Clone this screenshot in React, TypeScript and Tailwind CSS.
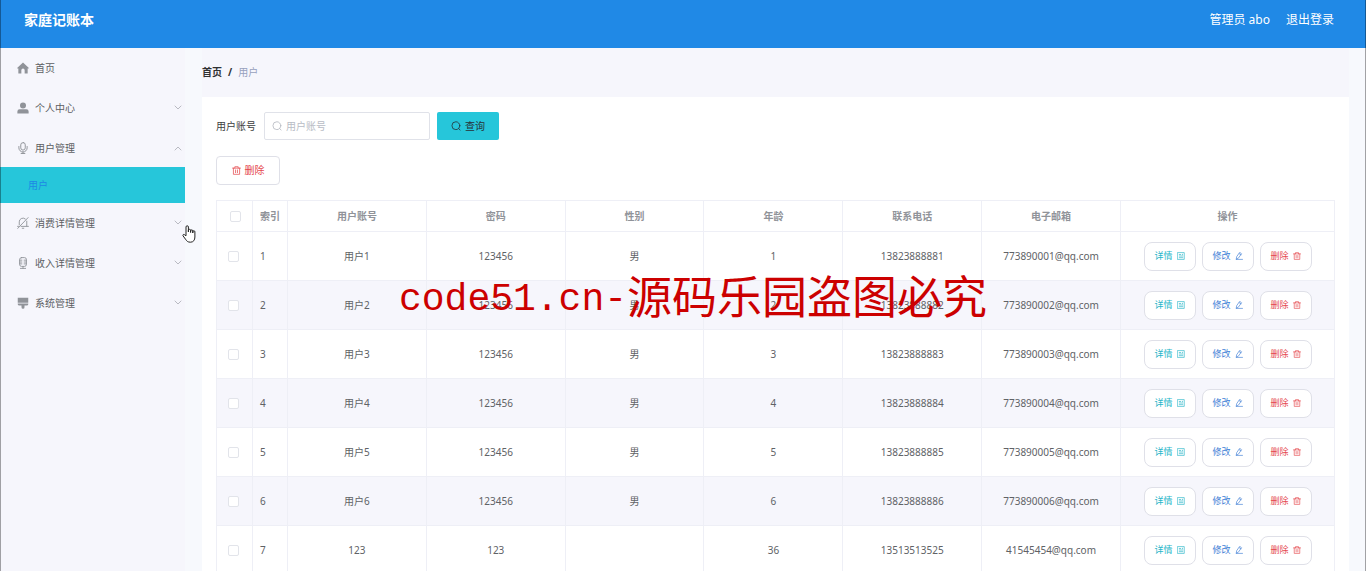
import type { ReactNode } from "react";

type IconProps = { className?: string };

const stroke = {
  viewBox: "0 0 16 16",
  fill: "none",
  stroke: "currentColor",
  strokeLinecap: "round",
  strokeLinejoin: "round",
  "aria-hidden": true,
} as const;

const HomeIcon = ({ className }: IconProps) => (
  <svg viewBox="0 0 16 16" fill="currentColor" className={className} aria-hidden>
    <path d="M8 .8.500 7.600c-.4.4-.2 1 .4 1h.9v6.600h4V11a2.200 2.200 0 0 1 4.400 0v4.200h4V8.600h.9c.6 0 .8-.6.4-1z" />
  </svg>
);

const UserIcon = ({ className }: IconProps) => (
  <svg viewBox="0 0 16 16" fill="currentColor" className={className} aria-hidden>
    <circle cx="8" cy="4.500" r="4" />
    <path d="M.5 15.200v-2.700a3 3 0 0 1 3-3h9a3 3 0 0 1 3 3v2.700z" />
  </svg>
);

const MicIcon = ({ className }: IconProps) => (
  <svg {...stroke} className={className} strokeWidth="1.300">
    <rect x="5" y=".8" width="6" height="10" rx="3" />
    <path d="M2.500 6v1.800a5.500 5.500 0 0 0 11 0V6M8 13.300v2M5.500 15.300h5" />
  </svg>
);

const BellOffIcon = ({ className }: IconProps) => (
  <svg {...stroke} className={className} strokeWidth="1.200">
    <path d="M3 10.500V6.500a5 5 0 0 1 8-4M13 5.500v7H5.500M.8 12.500H2M13 12.500h2.200M7 15h2M1 15.200 14.800.8" />
  </svg>
);

const MicroIcon = ({ className }: IconProps) => (
  <svg {...stroke} className={className} strokeWidth="1.200">
    <rect x="3.500" y=".8" width="9" height="11.700" rx="2.500" />
    <path d="M3.500 4.200h3M3.500 6.700h3M3.500 9.200h3M12.500 4.200h-3M12.500 6.700h-3M12.500 9.200h-3M8 12.500v2.700M4.500 15.200h7" />
  </svg>
);

const BrushIcon = ({ className }: IconProps) => (
  <svg viewBox="0 0 16 16" fill="currentColor" className={className} aria-hidden>
    <path d="M1 1h14v6.500H1zM1 8.500h14v1.200a1.500 1.500 0 0 1-1.500 1.500H10v2.500a2 2 0 0 1-4 0v-2.500H2.500A1.500 1.500 0 0 1 1 9.700z" />
  </svg>
);

const ChevronIcon = ({ className }: IconProps) => (
  <svg {...stroke} className={className} strokeWidth="1.600">
    <path d="m2 4 6 6 6-6" />
  </svg>
);

const SearchIcon = ({ className }: IconProps) => (
  <svg {...stroke} className={className} strokeWidth="1.300">
    <circle cx="7.800" cy="7.500" r="6.300" />
    <path d="m12.300 12 2.200 2.500" />
  </svg>
);

const TrashIcon = ({ className }: IconProps) => (
  <svg {...stroke} className={className} strokeWidth="1.300">
    <path d="M1 3.800h14M5 3.800V1.300h6v2.500M2.500 3.800v11h11v-11M6.300 7v4.800M9.700 7v4.800" />
  </svg>
);

const DocumentIcon = ({ className }: IconProps) => (
  <svg {...stroke} className={className} strokeWidth="1.300">
    <path d="M1.500 1.200h13v13.600h-13zM4.500 5h3M4.500 8h7M4.500 11.300h7M11 4.500v1" />
  </svg>
);

const EditIcon = ({ className }: IconProps) => (
  <svg {...stroke} className={className} strokeWidth="1.300">
    <path d="M10 1.200 13.200 3.500 6.500 12.500 2.500 14.500 3.200 10.200zM8.500 3.300l3.200 2.300M2.500 14.800H15" />
  </svg>
);

const menu = [
  { label: "首页", Icon: HomeIcon },
  { label: "个人中心", Icon: UserIcon, arrow: true },
  { label: "用户管理", Icon: MicIcon, arrow: true, open: true, child: "用户" },
  { label: "消费详情管理", Icon: BellOffIcon, arrow: true },
  { label: "收入详情管理", Icon: MicroIcon, arrow: true },
  { label: "系统管理", Icon: BrushIcon, arrow: true },
];

const columns = ["用户账号", "密码", "性别", "年龄", "联系电话", "电子邮箱"];

const users = [
  ["用户1", "123456", "男", "1", "13823888881", "773890001@qq.com"],
  ["用户2", "123456", "男", "2", "13823888882", "773890002@qq.com"],
  ["用户3", "123456", "男", "3", "13823888883", "773890003@qq.com"],
  ["用户4", "123456", "男", "4", "13823888884", "773890004@qq.com"],
  ["用户5", "123456", "男", "5", "13823888885", "773890005@qq.com"],
  ["用户6", "123456", "男", "6", "13823888886", "773890006@qq.com"],
  ["123", "123", "", "36", "13513513525", "41545454@qq.com"],
];

const Checkbox = ({ label }: { label: string }) => (
  <input
    type="checkbox"
    aria-label={label}
    className="block size-[11px] appearance-none rounded-xs border border-[#e2e4ea] bg-white checked:bg-[#26c6da]"
  />
);

const RowButton = ({ className, children }: { className: string; children: ReactNode }) => (
  <button
    type="button"
    className={`flex h-[29px] w-[52px] items-center justify-center gap-1 rounded-lg border border-[#dfe0e8] bg-white text-[9px] ${className}`}
  >
    {children}
  </button>
);

const Header = () => (
  <header className="flex h-12 shrink-0 items-center justify-between bg-[#2089e6] pr-8 pb-2 pl-6 text-white">
    <h1 className="text-sm font-bold">家庭记账本</h1>
    <div className="flex items-center gap-4 text-xs">
      <span>管理员 abo</span>
      <a href="#logout">退出登录</a>
    </div>
  </header>
);

const Sidebar = () => (
  <nav className="w-[185px] shrink-0 bg-[#f6f6fc] text-[#5c5e63]">
    <ul>
      {menu.map(({ label, Icon, arrow, open, child }) => (
        <li key={label}>
          <a href={`#${label}`} className="flex h-10 items-center pr-[3px] pl-[17px]">
            <Icon className="size-3 text-[#909399]" />
            <span className="ml-1.5 flex-1">{label}</span>
            {arrow && (
              <ChevronIcon className={`size-2 text-[#a9abb2] ${open ? "rotate-180" : ""}`} />
            )}
          </a>
          {child && (
            <a href={`#${child}`} className="-mt-px flex h-9 items-center bg-[#26c6da] pl-7 text-[#1e88e5]">
              {child}
            </a>
          )}
        </li>
      ))}
    </ul>
  </nav>
);

const UserTable = () => (
  <table className="mt-[15px] w-full table-fixed border-collapse border border-[#eeeff6] text-center text-[#606266]">
    <colgroup>
      <col className="w-9" />
      <col className="w-[35px]" />
      {columns.map((name) => (
        <col key={name} />
      ))}
      <col className="w-[214px]" />
    </colgroup>
    <thead className="text-[#909399]">
      <tr className="h-[31px]">
        <th className="border border-[#eeeff6] pl-[13px]">
          <Checkbox label="全选" />
        </th>
        <th className="border border-[#eeeff6] pl-[7px] text-left font-bold">索引</th>
        {columns.map((name) => (
          <th key={name} className="border border-[#eeeff6] font-bold">{name}</th>
        ))}
        <th className="border border-[#eeeff6] font-bold">操作</th>
      </tr>
    </thead>
    <tbody>
      {users.map((row, i) => (
        <tr key={i} className="h-[49px] even:bg-[#f6f6fc]">
          <td className="border border-[#eeeff6] pl-[11px]">
            <Checkbox label={`选择第${i + 1}行`} />
          </td>
          <td className="border border-[#eeeff6] pl-[7px] text-left">{i + 1}</td>
          {row.map((cell, j) => (
            <td key={j} className="border border-[#eeeff6]">{cell}</td>
          ))}
          <td className="border border-[#eeeff6]">
            <div className="flex justify-center gap-[6px]">
              <RowButton className="text-[#26b5c8]">
                详情 <DocumentIcon className="size-2" />
              </RowButton>
              <RowButton className="text-[#3f7fd6]">
                修改 <EditIcon className="size-2" />
              </RowButton>
              <RowButton className="text-[#e5484d]">
                删除 <TrashIcon className="size-2" />
              </RowButton>
            </div>
          </td>
        </tr>
      ))}
    </tbody>
  </table>
);

const App = () => {
  return (
    <div className="relative flex h-screen flex-col overflow-hidden bg-[#f7f9fd] font-['Noto_Sans','Noto_Sans_CJK_SC',sans-serif] text-[10px]">
      <Header />
      <div className="flex min-h-0 flex-1">
        <Sidebar />
        <main className="min-w-0 flex-1 px-[17px]">
          <div className="flex h-[49px] items-center gap-1.5 bg-[#f6f6fc]">
            <a href="#home" className="font-bold text-[#303133]">首页</a>
            <span className="font-bold text-[#303133]">/</span>
            <span className="text-[#97a0bd]">用户</span>
          </div>

          <section className="bg-white px-3.5 pt-[15px] pb-6">
            <form className="flex items-center">
              <label htmlFor="account" className="mr-2 text-[#3c3d40]">用户账号</label>
              <div className="relative">
                <SearchIcon className="absolute top-[9px] left-2 size-2.5 text-[#b4b8c0]" />
                <input
                  id="account"
                  type="text"
                  placeholder="用户账号"
                  className="h-7 w-[166px] rounded-xs border border-[#e0e2e9] bg-white pr-2 pl-[21px] placeholder:text-[#b8bcc5]"
                />
              </div>
              <button
                type="button"
                className="ml-[7px] flex h-7 w-[62px] items-center justify-center gap-1 rounded-xs bg-[#26c6da] text-[#263238]"
              >
                <SearchIcon className="size-2.5" />
                查询
              </button>
            </form>

            <button
              type="button"
              className="mt-4 flex h-[29px] w-16 items-center justify-center gap-1 rounded-sm border border-[#dfe0e8] bg-white text-[#e5484d]"
            >
              <TrashIcon className="size-[9px]" />
              删除
            </button>

            <UserTable />
          </section>
        </main>
      </div>

      {/* window edges */}
      <div className="pointer-events-none absolute inset-0 border-x border-black/35" />

      {/* watermark */}
      <p className="pointer-events-none absolute inset-x-0 top-[270px] flex items-start justify-center pl-5 leading-[50px] whitespace-nowrap text-[#cc0000]">
        <span className="font-['Liberation_Mono',monospace] text-[38px] leading-[60px]">code51.cn-</span>
        <span className="font-['Noto_Sans_CJK_SC',sans-serif] text-[45px]">源码乐园盗图必究</span>
      </p>

      {/* pointer */}
      <svg
        viewBox="0 0 14 18"
        className="pointer-events-none absolute top-[225px] left-[182px] h-[18px] w-3.5"
        fill="white"
        stroke="#222"
        strokeLinejoin="round"
        aria-hidden
      >
        <path d="M4 10.800V2a1.200 1.200 0 0 1 2.400 0v5V5.400a1.100 1.100 0 0 1 2.200 0V7.500 6a1.100 1.100 0 0 1 2.200 0v2-1.200a1 1 0 0 1 2.100 0V12c0 3-1.500 5.200-4.400 5.200-2.800 0-3.800-1.200-5-3L1 10.800c-.5-1 .6-1.800 1.500-1.100z" />
      </svg>
    </div>
  );
};

export default App;
